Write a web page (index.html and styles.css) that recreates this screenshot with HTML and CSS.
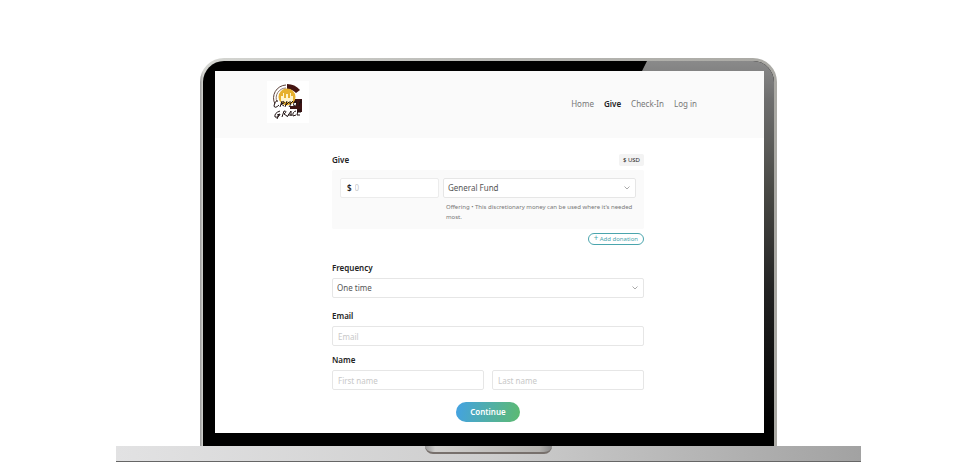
FILE: index.html
```html
<!DOCTYPE html>
<html lang="en">
<head>
  <meta charset="UTF-8">
  <meta name="viewport" content="width=device-width, initial-scale=1.0">
  <title>Give - City of Grace</title>
  <link rel="stylesheet" href="styles.css">
</head>
<body>
  <div class="laptop">
    <div class="lid">
      <div class="bezel">
        <div class="screen">
          <header class="header">
            <a class="logo" href="#" aria-label="City of Grace">
              <svg width="42" height="42" viewBox="0 0 42 42">
                <rect width="42" height="42" fill="#fff"/>
                <path d="M19 4A13 13 0 0 0 8 23" fill="none" stroke="#5b4038" stroke-width="1"/>
                <path d="M19 7A10 10 0 0 0 10 21" fill="none" stroke="#8b746b" stroke-width="1"/>
                <path d="M20 3Q28 3 33 9L29 12Q25 8 20 8Z" fill="#451512"/>
                <path d="M24 18h11v13h-5v-3h-7v-3h6v-3h-5z" fill="#3d1414"/>
                <circle cx="20" cy="16" r="8.500" fill="#e6b02e"/>
                <path d="M14 21v-6h2v-3h1v5h2v-4h2v4h2v-5h1v3h2v6z" fill="#fff4cc"/>
                <path d="M11 20Q8 19 7 25Q8 28 12 24M15 20l-2 6M14 22q4-3 3 0l-3 1 3 2M20 20l-2 6M22 21l-4 4M23 20l0 3 3-3M24 23l-2 3M29 20q-4 3-2 5q4-1 2-5zM34 19l-2 6M32 22l3-1" fill="none" stroke="#211313" stroke-width="1"/>
                <path d="M13 30q-6 2-5 6q4 1 5-3l-3 1M12 33l-2 5M15 36l2-6q4 0 0 3l3 2M20 36l4-6 0 5M21 34h4M29 30q-4 1-3 5l3-1M34 29h-3l-1 5h3M31 31h3" fill="none" stroke="#211313" stroke-width="1"/>
              </svg>
            </a>
            <nav class="nav">
              <a href="#">Home</a>
              <a class="active" href="#">Give</a>
              <a href="#">Check-In</a>
              <a href="#">Log in</a>
            </nav>
          </header>
          <form class="give-form">
            <div class="title-row">
              <h1>Give</h1>
              <span class="currency">$ USD</span>
            </div>
            <div class="donation">
              <div class="amount">
                <label for="amount">$</label>
                <input type="text" id="amount" name="amount" placeholder="0">
              </div>
              <div class="fund">
                <div class="select">
                  <select id="fund" name="fund" aria-label="Fund">
                    <option>General Fund</option>
                  </select>
                  <svg width="6" height="4" viewBox="0 0 6 4"><path d="M.5.5L3 3L5.500.5" fill="none" stroke="#aaa"/></svg>
                </div>
                <p>Offering • This discretionary money can be used where it's needed most.</p>
              </div>
            </div>
            <button class="add" type="button"><span>+</span> Add donation</button>
            <div class="form-group frequency">
              <label for="frequency">Frequency</label>
              <div class="select">
                <select id="frequency" name="frequency">
                  <option>One time</option>
                </select>
                <svg width="6" height="4" viewBox="0 0 6 4"><path d="M.5.5L3 3L5.500.5" fill="none" stroke="#aaa"/></svg>
              </div>
            </div>
            <div class="form-group email">
              <label for="email">Email</label>
              <input type="email" id="email" name="email" placeholder="Email">
            </div>
            <div class="form-group">
              <label for="first">Name</label>
              <div class="names">
                <input type="text" id="first" name="first" placeholder="First name">
                <input type="text" name="last" placeholder="Last name" aria-label="Last name">
              </div>
            </div>
            <button class="continue" type="submit">Continue</button>
          </form>
        </div>
      </div>
    </div>
    <div class="base"><div class="notch"></div></div>
  </div>
</body>
</html>
```

FILE: styles.css
```css
* {
  box-sizing: border-box;
}
body {
  margin: 0;
  padding: 58px 119px 0 116px;
  background-color: #fff;
  color: #222;
  font-family: "Noto Sans", "Open Sans", sans-serif;
  font-size: 8px;
  line-height: 12px;
}
input, select, button {
  font: inherit;
}
.lid {
  margin: 0 84px;
  padding: 3px 3px 0;
  border-radius: 24px 24px 0 0;
  background: linear-gradient(90deg, #999, #d5d6d2 3px, #b9b9b5 50%, #aaa9a4);
}
.bezel {
  position: relative;
  padding: 10px 10px 13px 12px;
  border-radius: 21px 21px 0 0;
  background-color: #000;
  overflow: hidden;
}
.bezel::before {
  content: "";
  position: absolute;
  top: 0;
  right: 0;
  width: 134px;
  height: 100%;
  background: linear-gradient(#8a8a8a, #6e6e6e 10%, #4a4a46 33%, #222 60%, #000 95%);
  clip-path: polygon(7px 0, 100% 0, 100% 100%, 120px 100%, 120px 10px, 2px 10px);
}
.screen {
  position: relative;
  background-color: #fff;
}
.header {
  display: flex;
  justify-content: space-between;
  padding: 10px 67px 15px 52px;
  background-color: #fafafa;
}
.logo {
  height: 42px;
}
.nav {
  display: flex;
  gap: 10px;
  padding-top: 17px;
}
.nav a {
  color: #777;
  text-decoration: none;
}
.nav .active {
  color: #222;
  font-weight: 600;
}
.give-form {
  margin: 0 120px 0 117px;
  padding: 16px 0 11px;
}
.title-row {
  display: flex;
  align-items: center;
  justify-content: space-between;
  margin-bottom: 4px;
}
h1 {
  margin: 0;
  font-size: 8px;
  font-weight: 600;
}
.currency {
  padding: 0 4px;
  border-radius: 2px;
  background-color: #f3f3f3;
  font-size: 6px;
}
.donation {
  display: flex;
  gap: 4px;
  padding: 8px 8px 7px;
  border-radius: 2px;
  background-color: #fafafa;
}
.amount {
  display: flex;
  align-items: center;
  width: 99px;
  height: 20px;
  padding-left: 6px;
  border: 1px solid #ececec;
  border-radius: 2px;
  background-color: #fff;
}
.amount label {
  font-weight: 600;
}
.amount input {
  width: 100%;
  padding: 0 3px;
  border: 0;
  background: none;
}
.fund {
  flex: 1;
}
.fund p {
  margin: 4px 0 0;
  padding-left: 3px;
  color: #777;
  font-size: 6px;
  line-height: 10px;
}
.select {
  position: relative;
}
.select select, .form-group input {
  display: block;
  width: 100%;
  height: 20px;
  padding: 0 5px;
  border: 1px solid #e6e6e6;
  border-radius: 2px;
  background-color: #fff;
  color: #555;
}
.select select {
  padding: 0 4px;
  appearance: none;
}
.select svg {
  position: absolute;
  top: 8px;
  right: 6px;
}
::placeholder {
  color: #c8c8c8;
}
.add {
  display: block;
  height: 12px;
  margin: 4px 0 0 auto;
  padding: 0 5px;
  border: 1px solid #4aa5ad;
  border-radius: 6px;
  background-color: #fff;
  color: #4aa5ad;
  font-size: 6px;
  line-height: 10px;
}
.add span {
  font-size: 8px;
  line-height: 8px;
}
.form-group label {
  display: block;
  margin-bottom: 4px;
  font-weight: 600;
}
.frequency {
  margin: 17px 0 12px;
}
.email {
  margin-bottom: 8px;
}
.names {
  display: grid;
  grid-template-columns: 1fr 1fr;
  gap: 8px;
}
.continue {
  display: block;
  width: 64px;
  height: 20px;
  margin: 12px auto 0;
  padding: 0;
  border: 0;
  border-radius: 10px;
  background: linear-gradient(100deg, #43a2e3, #5dba70);
  color: #fff;
  font-weight: 600;
}
.base {
  height: 16px;
  border-bottom: 1px solid #666;
  background: linear-gradient(90deg, #e2e2e3, #cecece 50%, #a2a2a2);
}
.notch {
  width: 127px;
  height: 8px;
  margin: 0 auto;
  border-bottom: 2px solid #77706c;
  border-radius: 0 0 10px 10px;
  background: linear-gradient(90deg, #999, #d0cfcd 8%, #b5b3b0 90%, #888);
}
```
